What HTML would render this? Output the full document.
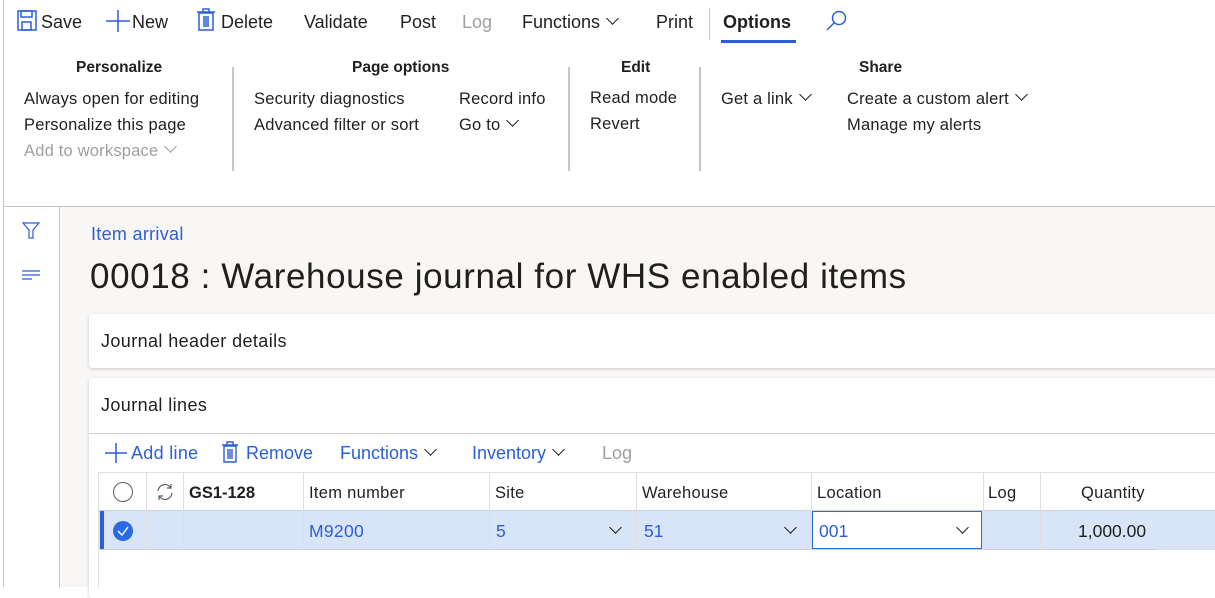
<!DOCTYPE html>
<html><head><style>
*{margin:0;padding:0;box-sizing:border-box}
body{width:1215px;height:587px;overflow:hidden;background:#fff;font-family:"Liberation Sans",sans-serif;color:#201f1e;position:relative}
.a{position:absolute;white-space:nowrap}
.tb{font-size:18px;top:12px}
.rb{font-size:16.5px;letter-spacing:0.2px}
.h{font-weight:bold;font-size:15.5px;top:59px}
.gr{color:#a19f9d}
.bl{color:#2b5fd9}
.vs{position:absolute;width:2px;background:#c8c6c4;top:67px;height:104px}
.chev{display:inline-block;width:9px;height:9px;border-right:1.5px solid currentColor;border-bottom:1.5px solid currentColor;transform:rotate(45deg);margin-left:8px;position:relative;top:-5px}
.gc{position:absolute;width:9px;height:9px;border-right:1.3px solid #201f1e;border-bottom:1.3px solid #201f1e;transform:rotate(45deg)}
.th{font-size:16.5px;top:484px;letter-spacing:0.3px}
.cl{position:absolute;top:472px;width:1px;height:78px;background:#e1dfdd}
</style></head><body>
<div class="a" style="left:3px;top:0;width:1px;height:587px;background:#c8c6c4"></div>
<svg class="a" style="left:17px;top:10px" width="20" height="21" viewBox="0 0 20 21"><rect x="1" y="1" width="18" height="19" fill="none" stroke="#2b5fd9" stroke-width="1.5"/><rect x="4" y="1" width="11" height="6" fill="none" stroke="#2b5fd9" stroke-width="1.5"/><rect x="5" y="12" width="9" height="8" fill="none" stroke="#2b5fd9" stroke-width="1.5"/></svg>
<div class="a tb" style="left:41px">Save</div>
<svg class="a" style="left:106px;top:10px" width="24" height="22"><path d="M12 0V22M0 11H24" stroke="#2b5fd9" stroke-width="1.5"/></svg>
<div class="a tb" style="left:132px">New</div>
<svg class="a" style="left:196px;top:7px" width="20" height="24"><path d="M3 6h14v17H3zM1 5h18M7 5V2h6v3M8 9v11M10 9v11M12 9v11" fill="none" stroke="#2b5fd9" stroke-width="1.5"/></svg>
<div class="a tb" style="left:221px">Delete</div>
<div class="a tb" style="left:304px">Validate</div>
<div class="a tb" style="left:400px">Post</div>
<div class="a tb gr" style="left:462px">Log</div>
<div class="a tb" style="left:522px">Functions<span class="chev"></span></div>
<div class="a tb" style="left:656px">Print</div>
<div class="a" style="left:709px;top:8px;width:1px;height:32px;background:#c8c6c4"></div>
<div class="a tb" style="left:723px;font-weight:bold">Options</div>
<div class="a" style="left:721px;top:40px;width:75px;height:3px;background:#2b5fd9"></div>
<svg class="a" style="left:826px;top:10px" width="22" height="22"><circle cx="13" cy="8" r="6.5" fill="none" stroke="#2b5fd9" stroke-width="1.5"/><path d="M8.5 12.5L1 20" stroke="#2b5fd9" stroke-width="1.5"/></svg>
<div class="a h" style="left:76px">Personalize</div>
<div class="a rb" style="left:24px;top:90px">Always open for editing</div>
<div class="a rb" style="left:24px;top:116px">Personalize this page</div>
<div class="a rb gr" style="left:24px;top:142px">Add to workspace<span class="chev"></span></div>
<div class="vs" style="left:232px"></div>
<div class="a h" style="left:352px">Page options</div>
<div class="a rb" style="left:254px;top:90px">Security diagnostics</div>
<div class="a rb" style="left:254px;top:116px">Advanced filter or sort</div>
<div class="a rb" style="left:459px;top:90px">Record info</div>
<div class="a rb" style="left:459px;top:116px">Go to<span class="chev"></span></div>
<div class="vs" style="left:568px"></div>
<div class="a h" style="left:621px">Edit</div>
<div class="a rb" style="left:590px;top:89px">Read mode</div>
<div class="a rb" style="left:590px;top:115px">Revert</div>
<div class="vs" style="left:699px"></div>
<div class="a h" style="left:859px">Share</div>
<div class="a rb" style="left:721px;top:90px">Get a link<span class="chev"></span></div>
<div class="a rb" style="left:847px;top:90px">Create a custom alert<span class="chev"></span></div>
<div class="a rb" style="left:847px;top:116px">Manage my alerts</div>
<div class="a" style="left:3px;top:206px;width:1212px;height:1px;background:#c8c6c4"></div>
<div class="a" style="left:59px;top:207px;width:1px;height:380px;background:#c8c6c4"></div>
<svg class="a" style="left:22px;top:222px" width="18" height="17"><path d="M1 1h16L11 8v8H7V8z" fill="none" stroke="#2b5fd9" stroke-width="1.2"/></svg>
<svg class="a" style="left:22px;top:270px" width="18" height="10"><path d="M0 1h18M0 5h18M0 9h10" stroke="#2b5fd9" stroke-width="1.2"/></svg>
<div class="a" style="left:60px;top:207px;width:1155px;height:380px;background:#f8f7f6"></div>
<div class="a bl" style="left:91px;top:224px;font-size:18px;letter-spacing:0.3px">Item arrival</div>
<div class="a" style="left:90px;top:257px;font-size:35px;letter-spacing:0.6px">00018 : Warehouse journal for WHS enabled items</div>
<div class="a" style="left:89px;top:314px;width:1130px;height:54px;background:#fff;border-radius:3px;box-shadow:0 1px 3px rgba(0,0,0,.2)"></div>
<div class="a" style="left:101px;top:331px;font-size:18px;letter-spacing:0.4px">Journal header details</div>
<div class="a" style="left:89px;top:378px;width:1130px;height:220px;background:#fff;border-radius:3px;box-shadow:0 1px 3px rgba(0,0,0,.2)"></div>
<div class="a" style="left:101px;top:395px;font-size:18px;letter-spacing:0.4px">Journal lines</div>
<div class="a" style="left:89px;top:433px;width:1126px;height:1px;background:#d2d0ce"></div>
<svg class="a" style="left:105px;top:443px" width="22" height="20"><path d="M11 0V20M0 10H22" stroke="#2b5fd9" stroke-width="1.5"/></svg>
<div class="a bl" style="left:131px;top:443px;font-size:18px;letter-spacing:0.3px">Add line</div>
<svg class="a" style="left:221px;top:441px" width="18" height="22"><path d="M3 5h12v16H3zM1 4h16M6 4V1h6v3M7 8v10M9 8v10M11 8v10" fill="none" stroke="#2b5fd9" stroke-width="1.4"/></svg>
<div class="a bl" style="left:246px;top:443px;font-size:18px">Remove</div>
<div class="a bl" style="left:340px;top:443px;font-size:18px">Functions<span class="chev" style="color:#201f1e"></span></div>
<div class="a bl" style="left:472px;top:443px;font-size:18px">Inventory<span class="chev" style="color:#201f1e"></span></div>
<div class="a gr" style="left:602px;top:443px;font-size:18px">Log</div>
<div class="a" style="left:98px;top:472px;width:1117px;height:1px;background:#e1dfdd"></div>
<div class="a" style="left:98px;top:472px;width:1px;height:115px;background:#e1dfdd"></div>
<div class="a" style="left:99px;top:511px;width:1116px;height:39px;background:#d8e4f8"></div>
<div class="a" style="left:99px;top:510px;width:1116px;height:1px;background:#d2d0ce"></div>
<div class="a" style="left:99px;top:549px;width:1058px;height:1px;background:#d2d0ce"></div>
<div class="a" style="left:100px;top:511px;width:4px;height:38px;background:#2b5fd9"></div>
<div class="cl" style="left:146px"></div><div class="cl" style="left:183px"></div><div class="cl" style="left:303px"></div><div class="cl" style="left:489px"></div><div class="cl" style="left:636px"></div><div class="cl" style="left:811px"></div><div class="cl" style="left:983px"></div><div class="cl" style="left:1040px"></div>
<div class="a" style="left:113px;top:482px;width:20px;height:20px;border:1.2px solid #605e5c;border-radius:50%"></div>
<svg class="a" style="left:156px;top:483px" width="18" height="18"><path d="M2 8A7 7 0 0 1 15 5M16 10A7 7 0 0 1 3 13M15 1v4h-4M3 17v-4h4" fill="none" stroke="#605e5c" stroke-width="1.2"/></svg>
<div class="a th" style="left:189px;font-weight:bold;letter-spacing:0">GS1-128</div>
<div class="a th" style="left:309px">Item number</div>
<div class="a th" style="left:495px">Site</div>
<div class="a th" style="left:642px">Warehouse</div>
<div class="a th" style="left:817px">Location</div>
<div class="a th" style="left:988px">Log</div>
<div class="a th" style="left:1081px">Quantity</div>
<svg class="a" style="left:112px;top:520px" width="22" height="22"><circle cx="11" cy="11" r="10" fill="#2b6be0"/><path d="M6 11l4 4 6-8" fill="none" stroke="#fff" stroke-width="1.4"/></svg>
<div class="a bl" style="left:309px;top:521px;font-size:17.5px;letter-spacing:0.3px">M9200</div>
<div class="a bl" style="left:496px;top:521px;font-size:17.5px">5</div>
<div class="gc" style="left:611px;top:523px"></div>
<div class="a bl" style="left:644px;top:521px;font-size:17.5px">51</div>
<div class="gc" style="left:786px;top:523px"></div>
<div class="a" style="left:812px;top:511px;width:170px;height:38px;background:#fff;border:1.5px solid #2b6be0"></div>
<div class="a bl" style="left:819px;top:521px;font-size:17.5px">001</div>
<div class="gc" style="left:958px;top:523px"></div>
<div class="a" style="left:1078px;top:521px;font-size:17.5px">1,000.00</div>
</body></html>
